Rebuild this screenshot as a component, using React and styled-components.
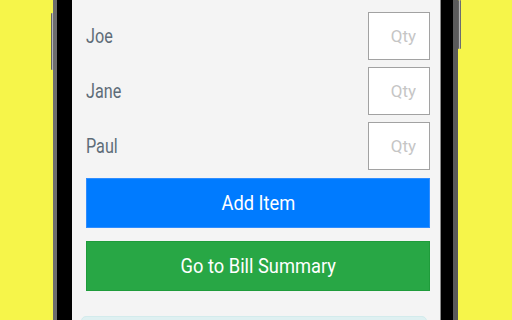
import React from 'react'
import styled, { createGlobalStyle } from 'styled-components'

const GlobalStyle = createGlobalStyle`
  html, body {
    margin: 0;
    padding: 0;
    background: #f6f54a;
    overflow: hidden;
  }
  body {
    font-family: Roboto, "Liberation Sans", sans-serif;
  }
`

const Page = styled.div`
  width: 512px;
  height: 320px;
  display: flex;
  background: #f6f54a;
  overflow: hidden;
`

const Phone = styled.div`
  position: relative;
  margin-left: 53px;
  width: 405px;
  height: 320px;
  display: flex;
  box-sizing: border-box;
  background: #000;
  border-left: 4px solid #6d6d6d;
  border-right: 5px solid #5a5a5a;
  padding: 0 12px 0 15px;
`

const SideButton = styled.div`
  position: absolute;
  width: 3px;
  background: linear-gradient(90deg, #3a3a3a, #b5b5b5, #4a4a4a);
  border-radius: 1px;
  ${p => p.$side === 'left' ? 'left: -6px; top: 13px; height: 57px;' : 'right: -8px; top: 0; height: 49px;'}
`

const Screen = styled.div`
  flex: 1;
  background: #f4f4f4;
  border-right: 1px solid #8a8a8a;
  padding: 12px 10px 0 14px;
  display: flex;
  flex-direction: column;
  gap: 7px;
  overflow: hidden;
`

const Row = styled.div`
  display: flex;
  align-items: center;
  justify-content: space-between;
  height: 48px;
  flex-shrink: 0;
`

// the phone capture is squeezed sideways, so the labels are too
const Name = styled.span`
  display: inline-block;
  font-size: 19.5px;
  color: #5e6c78;
  transform: scaleX(0.83);
  transform-origin: left center;
`

const QtyBox = styled.input`
  width: 62px;
  height: 48px;
  box-sizing: border-box;
  border: 1.5px solid #a2a2a2;
  background: #fff;
  font-family: Roboto, "Liberation Sans", sans-serif;
  font-size: 17px;
  text-align: right;
  padding: 0 13px 0 0;
  outline: none;
  &::placeholder {
    color: #c6c6c6;
  }
`

const ActionButton = styled.button`
  flex-shrink: 0;
  height: 50px;
  width: 100%;
  border: 1px solid ${p => p.$border};
  background: ${p => p.$bg};
  color: #fff;
  font-family: Roboto, "Liberation Sans", sans-serif;
  font-size: 21px;
  margin-top: ${p => p.$top}px;
  padding: 0;
`

const Label = styled.span`
  display: inline-block;
  transform: scaleX(0.87);
`

const InfoBox = styled.div`
  margin: 18px 3px 0 -5px;
  height: 40px;
  flex-shrink: 0;
  background: #def0f1;
  border: 1px solid #d3ebec;
  border-radius: 5px;
`

const people = ['Joe', 'Jane', 'Paul']

export default function App() {
  return (
    <>
      <GlobalStyle />
      <Page>
        <Phone>
          <SideButton $side="left" />
          <SideButton $side="right" />
          <Screen>
            {people.map(name => (
              <Row key={name}>
                <Name>{name}</Name>
                <QtyBox placeholder="Qty" />
              </Row>
            ))}
            <ActionButton $bg="#007bff" $border="#2f8dff" $top={1}>
              <Label>Add Item</Label>
            </ActionButton>
            <ActionButton $bg="#28a745" $border="#1f9c3b" $top={6}>
              <Label>Go to Bill Summary</Label>
            </ActionButton>
            <InfoBox />
          </Screen>
        </Phone>
      </Page>
    </>
  )
}
